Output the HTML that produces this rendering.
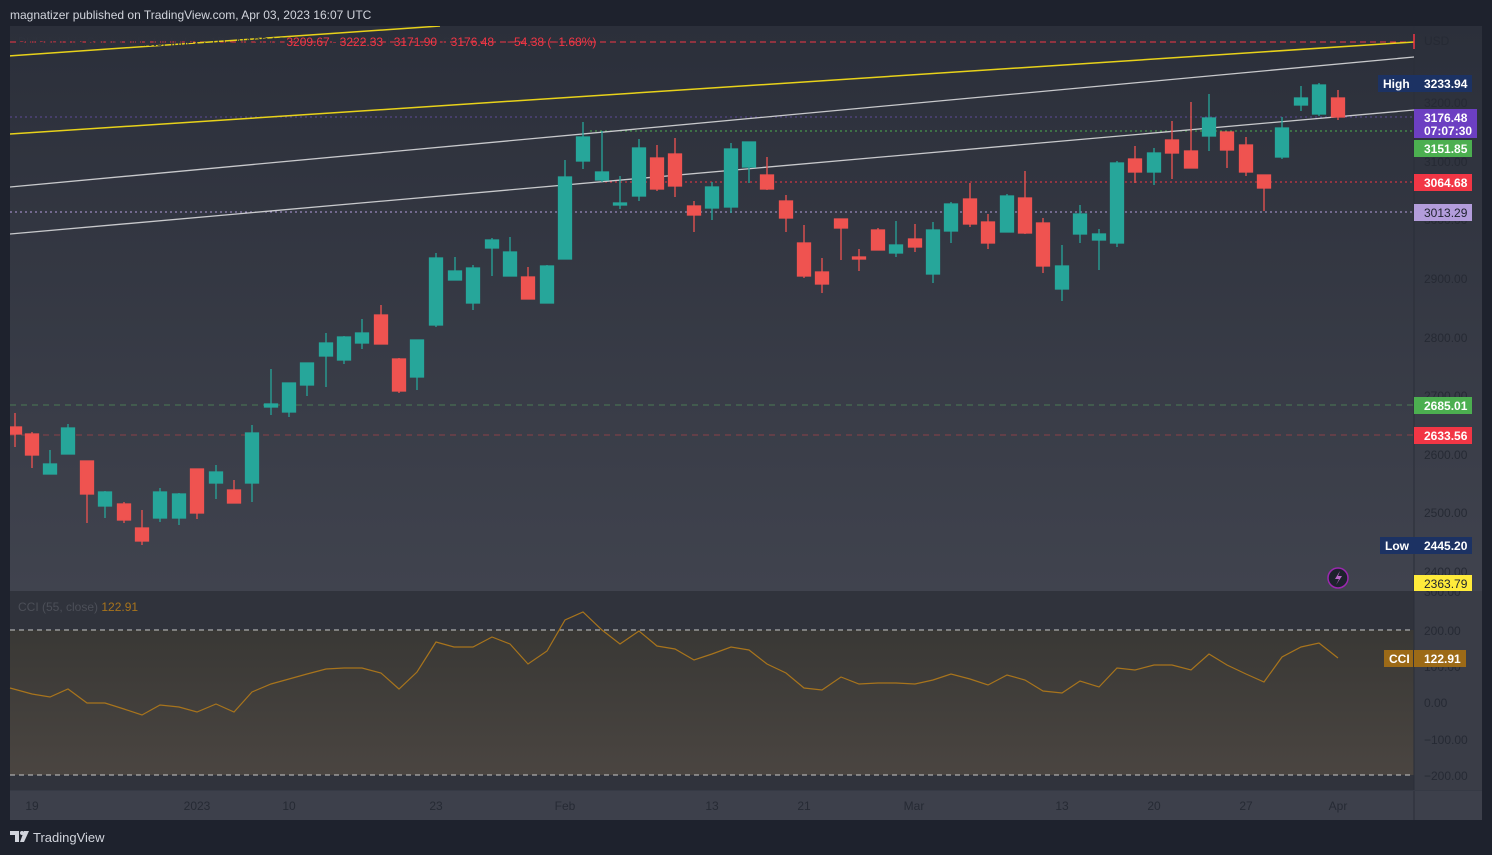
<!DOCTYPE html>
<html><head><meta charset="utf-8"><style>
html,body{margin:0;padding:0;background:#1e222d;}
svg{display:block;font-family:"Liberation Sans",sans-serif;}
</style></head><body>
<svg width="1492" height="855" viewBox="0 0 1492 855" xmlns="http://www.w3.org/2000/svg">
<defs>
<linearGradient id="mg" x1="0" y1="0" x2="0" y2="1"><stop offset="0" stop-color="#2b2f3a"/><stop offset="1" stop-color="#40434e"/></linearGradient>
<linearGradient id="cg" x1="0" y1="0" x2="0" y2="1"><stop offset="0" stop-color="#393835"/><stop offset="1" stop-color="#4a4541"/></linearGradient>
<clipPath id="mc"><rect x="10" y="26" width="1404" height="564"/></clipPath>
</defs>
<rect width="1492" height="855" fill="#1e222d"/>
<text x="10" y="19" font-size="12" fill="#d1d4dc">magnatizer published on TradingView.com, Apr 03, 2023 16:07 UTC</text>
<rect x="10" y="26" width="1472" height="565" fill="url(#mg)"/>
<rect x="10" y="591" width="1472" height="199" fill="#30333c"/>
<rect x="10" y="630" width="1404" height="145" fill="url(#cg)"/>
<rect x="1414" y="591" width="68" height="199" fill="#3a3d47"/>
<rect x="10" y="790" width="1472" height="30" fill="#3d404b"/>
<line x1="1414" y1="26" x2="1414" y2="820" stroke="#2a2e39" stroke-width="1"/>
<line x1="10" y1="790.5" x2="1482" y2="790.5" stroke="#363a45"/>
<g clip-path="url(#mc)">
<line x1="10" y1="42" x2="1414" y2="42" stroke="#f23645" stroke-dasharray="6 4"/>
<line x1="10" y1="405" x2="1414" y2="405" stroke="#4a7a55" stroke-dasharray="6 5"/>
<line x1="10" y1="435" x2="1414" y2="435" stroke="#8a4048" stroke-dasharray="6 5"/>
<line x1="10" y1="117" x2="1414" y2="117" stroke="#5e4a96" stroke-dasharray="2 3"/>
<line x1="590" y1="131" x2="1414" y2="131" stroke="#4caf50" stroke-dasharray="2 3"/>
<line x1="600" y1="182" x2="1414" y2="182" stroke="#f23645" stroke-dasharray="2 3"/>
<line x1="10" y1="212" x2="1414" y2="212" stroke="#b39ddb" stroke-dasharray="2 3"/>
<line x1="8" y1="56" x2="440" y2="26" stroke="#e8d21a" stroke-width="1.5"/>
<line x1="10" y1="134" x2="1414" y2="42" stroke="#e8d21a" stroke-width="1.5"/>
<line x1="10" y1="187" x2="1414" y2="57" stroke="#c8c9cc" stroke-width="1.3"/>
<line x1="10" y1="234" x2="1414" y2="110" stroke="#c8c9cc" stroke-width="1.3"/>
<g stroke-width="1.3">
<g fill="#ef5350" stroke="#ef5350"><line x1="15" y1="413" x2="15" y2="447"/><rect x="8.5" y="427" width="13" height="7"/></g>
<g fill="#ef5350" stroke="#ef5350"><line x1="32" y1="432" x2="32" y2="468"/><rect x="25.5" y="434" width="13" height="21"/></g>
<g fill="#26a69a" stroke="#26a69a"><line x1="50" y1="450" x2="50" y2="474"/><rect x="43.5" y="464" width="13" height="10"/></g>
<g fill="#26a69a" stroke="#26a69a"><line x1="68" y1="424" x2="68" y2="454"/><rect x="61.5" y="428" width="13" height="26"/></g>
<g fill="#ef5350" stroke="#ef5350"><line x1="87" y1="461" x2="87" y2="523"/><rect x="80.5" y="461" width="13" height="33"/></g>
<g fill="#26a69a" stroke="#26a69a"><line x1="105" y1="491" x2="105" y2="518"/><rect x="98.5" y="492" width="13" height="14"/></g>
<g fill="#ef5350" stroke="#ef5350"><line x1="124" y1="502" x2="124" y2="523"/><rect x="117.5" y="504" width="13" height="16"/></g>
<g fill="#ef5350" stroke="#ef5350"><line x1="142" y1="510" x2="142" y2="545"/><rect x="135.5" y="528" width="13" height="13"/></g>
<g fill="#26a69a" stroke="#26a69a"><line x1="160" y1="488" x2="160" y2="522"/><rect x="153.5" y="492" width="13" height="26"/></g>
<g fill="#26a69a" stroke="#26a69a"><line x1="179" y1="493" x2="179" y2="525"/><rect x="172.5" y="494" width="13" height="24"/></g>
<g fill="#ef5350" stroke="#ef5350"><line x1="197" y1="469" x2="197" y2="519"/><rect x="190.5" y="469" width="13" height="44"/></g>
<g fill="#26a69a" stroke="#26a69a"><line x1="216" y1="465" x2="216" y2="499"/><rect x="209.5" y="472" width="13" height="11"/></g>
<g fill="#ef5350" stroke="#ef5350"><line x1="234" y1="480" x2="234" y2="503"/><rect x="227.5" y="490" width="13" height="13"/></g>
<g fill="#26a69a" stroke="#26a69a"><line x1="252" y1="425" x2="252" y2="502"/><rect x="245.5" y="433" width="13" height="50"/></g>
<g fill="#26a69a" stroke="#26a69a"><line x1="271" y1="369" x2="271" y2="415"/><rect x="264.5" y="404" width="13" height="3"/></g>
<g fill="#26a69a" stroke="#26a69a"><line x1="289" y1="383" x2="289" y2="417"/><rect x="282.5" y="383" width="13" height="29"/></g>
<g fill="#26a69a" stroke="#26a69a"><line x1="307" y1="363" x2="307" y2="396"/><rect x="300.5" y="363" width="13" height="22"/></g>
<g fill="#26a69a" stroke="#26a69a"><line x1="326" y1="333" x2="326" y2="387"/><rect x="319.5" y="343" width="13" height="13"/></g>
<g fill="#26a69a" stroke="#26a69a"><line x1="344" y1="336" x2="344" y2="364"/><rect x="337.5" y="337" width="13" height="23"/></g>
<g fill="#26a69a" stroke="#26a69a"><line x1="362" y1="319" x2="362" y2="349"/><rect x="355.5" y="333" width="13" height="10"/></g>
<g fill="#ef5350" stroke="#ef5350"><line x1="381" y1="305" x2="381" y2="344"/><rect x="374.5" y="315" width="13" height="29"/></g>
<g fill="#ef5350" stroke="#ef5350"><line x1="399" y1="358" x2="399" y2="393"/><rect x="392.5" y="359" width="13" height="32"/></g>
<g fill="#26a69a" stroke="#26a69a"><line x1="417" y1="340" x2="417" y2="390"/><rect x="410.5" y="340" width="13" height="37"/></g>
<g fill="#26a69a" stroke="#26a69a"><line x1="436" y1="253" x2="436" y2="327"/><rect x="429.5" y="258" width="13" height="67"/></g>
<g fill="#26a69a" stroke="#26a69a"><line x1="455" y1="257" x2="455" y2="280"/><rect x="448.5" y="271" width="13" height="9"/></g>
<g fill="#26a69a" stroke="#26a69a"><line x1="473" y1="265" x2="473" y2="310"/><rect x="466.5" y="268" width="13" height="35"/></g>
<g fill="#26a69a" stroke="#26a69a"><line x1="492" y1="238" x2="492" y2="276"/><rect x="485.5" y="240" width="13" height="8"/></g>
<g fill="#26a69a" stroke="#26a69a"><line x1="510" y1="237" x2="510" y2="276"/><rect x="503.5" y="252" width="13" height="24"/></g>
<g fill="#ef5350" stroke="#ef5350"><line x1="528" y1="267" x2="528" y2="299"/><rect x="521.5" y="277" width="13" height="22"/></g>
<g fill="#26a69a" stroke="#26a69a"><line x1="547" y1="265" x2="547" y2="303"/><rect x="540.5" y="266" width="13" height="37"/></g>
<g fill="#26a69a" stroke="#26a69a"><line x1="565" y1="160" x2="565" y2="259"/><rect x="558.5" y="177" width="13" height="82"/></g>
<g fill="#26a69a" stroke="#26a69a"><line x1="583" y1="122" x2="583" y2="169"/><rect x="576.5" y="137" width="13" height="24"/></g>
<g fill="#26a69a" stroke="#26a69a"><line x1="602" y1="131" x2="602" y2="182"/><rect x="595.5" y="172" width="13" height="8"/></g>
<g fill="#26a69a" stroke="#26a69a"><line x1="620" y1="176" x2="620" y2="209"/><rect x="613.5" y="203" width="13" height="2"/></g>
<g fill="#26a69a" stroke="#26a69a"><line x1="639" y1="139" x2="639" y2="201"/><rect x="632.5" y="148" width="13" height="48"/></g>
<g fill="#ef5350" stroke="#ef5350"><line x1="657" y1="145" x2="657" y2="191"/><rect x="650.5" y="158" width="13" height="31"/></g>
<g fill="#ef5350" stroke="#ef5350"><line x1="675" y1="138" x2="675" y2="197"/><rect x="668.5" y="154" width="13" height="32"/></g>
<g fill="#ef5350" stroke="#ef5350"><line x1="694" y1="201" x2="694" y2="232"/><rect x="687.5" y="206" width="13" height="9"/></g>
<g fill="#26a69a" stroke="#26a69a"><line x1="712" y1="182" x2="712" y2="220"/><rect x="705.5" y="187" width="13" height="21"/></g>
<g fill="#26a69a" stroke="#26a69a"><line x1="731" y1="143" x2="731" y2="213"/><rect x="724.5" y="149" width="13" height="58"/></g>
<g fill="#26a69a" stroke="#26a69a"><line x1="749" y1="142" x2="749" y2="183"/><rect x="742.5" y="142" width="13" height="25"/></g>
<g fill="#ef5350" stroke="#ef5350"><line x1="767" y1="157" x2="767" y2="190"/><rect x="760.5" y="175" width="13" height="14"/></g>
<g fill="#ef5350" stroke="#ef5350"><line x1="786" y1="195" x2="786" y2="232"/><rect x="779.5" y="201" width="13" height="17"/></g>
<g fill="#ef5350" stroke="#ef5350"><line x1="804" y1="225" x2="804" y2="278"/><rect x="797.5" y="243" width="13" height="33"/></g>
<g fill="#ef5350" stroke="#ef5350"><line x1="822" y1="258" x2="822" y2="293"/><rect x="815.5" y="272" width="13" height="12"/></g>
<g fill="#ef5350" stroke="#ef5350"><line x1="841" y1="219" x2="841" y2="260"/><rect x="834.5" y="219" width="13" height="9"/></g>
<g fill="#ef5350" stroke="#ef5350"><line x1="859" y1="249" x2="859" y2="271"/><rect x="852.5" y="257" width="13" height="2"/></g>
<g fill="#ef5350" stroke="#ef5350"><line x1="878" y1="228" x2="878" y2="250"/><rect x="871.5" y="230" width="13" height="20"/></g>
<g fill="#26a69a" stroke="#26a69a"><line x1="896" y1="221" x2="896" y2="257"/><rect x="889.5" y="245" width="13" height="8"/></g>
<g fill="#ef5350" stroke="#ef5350"><line x1="915" y1="224" x2="915" y2="252"/><rect x="908.5" y="239" width="13" height="8"/></g>
<g fill="#26a69a" stroke="#26a69a"><line x1="933" y1="222" x2="933" y2="283"/><rect x="926.5" y="230" width="13" height="44"/></g>
<g fill="#26a69a" stroke="#26a69a"><line x1="951" y1="202" x2="951" y2="243"/><rect x="944.5" y="204" width="13" height="27"/></g>
<g fill="#ef5350" stroke="#ef5350"><line x1="970" y1="183" x2="970" y2="227"/><rect x="963.5" y="199" width="13" height="25"/></g>
<g fill="#ef5350" stroke="#ef5350"><line x1="988" y1="214" x2="988" y2="249"/><rect x="981.5" y="222" width="13" height="21"/></g>
<g fill="#26a69a" stroke="#26a69a"><line x1="1007" y1="194" x2="1007" y2="232"/><rect x="1000.5" y="196" width="13" height="36"/></g>
<g fill="#ef5350" stroke="#ef5350"><line x1="1025" y1="171" x2="1025" y2="234"/><rect x="1018.5" y="198" width="13" height="35"/></g>
<g fill="#ef5350" stroke="#ef5350"><line x1="1043" y1="218" x2="1043" y2="273"/><rect x="1036.5" y="223" width="13" height="43"/></g>
<g fill="#26a69a" stroke="#26a69a"><line x1="1062" y1="245" x2="1062" y2="301"/><rect x="1055.5" y="266" width="13" height="23"/></g>
<g fill="#26a69a" stroke="#26a69a"><line x1="1080" y1="205" x2="1080" y2="243"/><rect x="1073.5" y="214" width="13" height="20"/></g>
<g fill="#26a69a" stroke="#26a69a"><line x1="1099" y1="229" x2="1099" y2="270"/><rect x="1092.5" y="234" width="13" height="6"/></g>
<g fill="#26a69a" stroke="#26a69a"><line x1="1117" y1="161" x2="1117" y2="247"/><rect x="1110.5" y="163" width="13" height="80"/></g>
<g fill="#ef5350" stroke="#ef5350"><line x1="1135" y1="146" x2="1135" y2="183"/><rect x="1128.5" y="159" width="13" height="13"/></g>
<g fill="#26a69a" stroke="#26a69a"><line x1="1154" y1="148" x2="1154" y2="185"/><rect x="1147.5" y="153" width="13" height="19"/></g>
<g fill="#ef5350" stroke="#ef5350"><line x1="1172" y1="121" x2="1172" y2="179"/><rect x="1165.5" y="140" width="13" height="13"/></g>
<g fill="#ef5350" stroke="#ef5350"><line x1="1191" y1="102" x2="1191" y2="168"/><rect x="1184.5" y="151" width="13" height="17"/></g>
<g fill="#26a69a" stroke="#26a69a"><line x1="1209" y1="94" x2="1209" y2="151"/><rect x="1202.5" y="118" width="13" height="18"/></g>
<g fill="#ef5350" stroke="#ef5350"><line x1="1227" y1="132" x2="1227" y2="168"/><rect x="1220.5" y="132" width="13" height="18"/></g>
<g fill="#ef5350" stroke="#ef5350"><line x1="1246" y1="137" x2="1246" y2="176"/><rect x="1239.5" y="145" width="13" height="27"/></g>
<g fill="#ef5350" stroke="#ef5350"><line x1="1264" y1="175" x2="1264" y2="211"/><rect x="1257.5" y="175" width="13" height="13"/></g>
<g fill="#26a69a" stroke="#26a69a"><line x1="1282" y1="117" x2="1282" y2="159"/><rect x="1275.5" y="128" width="13" height="29"/></g>
<g fill="#26a69a" stroke="#26a69a"><line x1="1301" y1="86" x2="1301" y2="111"/><rect x="1294.5" y="98" width="13" height="7"/></g>
<g fill="#26a69a" stroke="#26a69a"><line x1="1319" y1="83" x2="1319" y2="116"/><rect x="1312.5" y="85" width="13" height="29"/></g>
<g fill="#ef5350" stroke="#ef5350"><line x1="1338" y1="90" x2="1338" y2="120"/><rect x="1331.5" y="98" width="13" height="19"/></g>
</g>
</g>
<line x1="1414" y1="34" x2="1414" y2="49" stroke="#f23645" stroke-width="1.5"/>
<g font-size="12" fill="#2e323d">
<text x="18" y="46">Philadelphia Semiconductor Index · 1D · NASDAQ</text>
<text x="277" y="46">O<tspan fill="#f23645">3209.67</tspan></text>
<text x="331" y="46">H<tspan fill="#f23645">3222.33</tspan></text>
<text x="387" y="46">L<tspan fill="#f23645">3171.90</tspan></text>
<text x="442" y="46">C<tspan fill="#f23645">3176.48</tspan></text>
<text x="507" y="46" fill="#f23645">−54.38 (−1.68%)</text>
</g>
<g font-size="12" fill="#262a34">
<text x="1424" y="45">USD</text>
<text x="1424" y="107">3200.00</text>
<text x="1424" y="166">3100.00</text>
<text x="1424" y="224">3000.00</text>
<text x="1424" y="283">2900.00</text>
<text x="1424" y="342">2800.00</text>
<text x="1424" y="400">2700.00</text>
<text x="1424" y="459">2600.00</text>
<text x="1424" y="517">2500.00</text>
<text x="1424" y="576">2400.00</text>
<text x="1424" y="596">300.00</text>
<text x="1424" y="635">200.00</text>
<text x="1424" y="671">100.00</text>
<text x="1424" y="707">0.00</text>
<text x="1424" y="744">−100.00</text>
<text x="1424" y="780">−200.00</text>
</g>
<g font-size="12" font-weight="bold">
<rect x="1378" y="75" width="36" height="17" fill="#1c3263"/><text x="1383" y="88" fill="#fff">High</text>
<rect x="1414" y="75" width="58" height="17" fill="#1c3263"/><text x="1424" y="88" fill="#fff">3233.94</text>
<rect x="1414" y="109" width="63" height="29" fill="#6c3fc2"/><text x="1424" y="122" fill="#fff">3176.48</text><text x="1424" y="135" fill="#fff">07:07:30</text>
<rect x="1414" y="140" width="58" height="17" fill="#4caf50"/><text x="1424" y="153" fill="#fff">3151.85</text>
<rect x="1414" y="174" width="58" height="17" fill="#f23645"/><text x="1424" y="187" fill="#fff">3064.68</text>
<rect x="1414" y="204" width="58" height="17" fill="#b39ddb"/><text x="1424" y="217" fill="#1e222d" font-weight="normal">3013.29</text>
<rect x="1414" y="397" width="58" height="17" fill="#4caf50"/><text x="1424" y="410" fill="#fff">2685.01</text>
<rect x="1414" y="427" width="58" height="17" fill="#f23645"/><text x="1424" y="440" fill="#fff">2633.56</text>
<rect x="1380" y="537" width="34" height="17" fill="#1c3263"/><text x="1385" y="550" fill="#fff">Low</text>
<rect x="1414" y="537" width="58" height="17" fill="#1c3263"/><text x="1424" y="550" fill="#fff">2445.20</text>
<rect x="1414" y="575" width="58" height="16" fill="#ffeb3b"/><text x="1424" y="588" fill="#1e222d" font-weight="normal">2363.79</text>
</g>
<circle cx="1338" cy="578" r="10" fill="#1e222d" stroke="#9c27b0" stroke-width="1.5"/>
<path d="M1340 571 L1335 579 L1339 579 L1336 585 L1342 576 L1338 576 Z" fill="#ba68c8"/>
<line x1="10" y1="630" x2="1414" y2="630" stroke="#c8c8c8" stroke-dasharray="5 4"/>
<line x1="10" y1="775" x2="1414" y2="775" stroke="#c8c8c8" stroke-dasharray="5 4"/>
<text x="18" y="611" font-size="12" fill="#4c4f58">CCI (55, close) <tspan fill="#a8741c">122.91</tspan></text>
<polyline fill="none" stroke="#a8741c" stroke-width="1.2" points="10,688 32,694 50,697 68,689 87,703 105,703 124,709 142,715 160,705 179,707 197,712 216,704 234,712 252,692 271,684 289,679 307,674 326,669 344,668 362,668 381,673 399,689 417,672 436,642 454,647 473,647 492,637 510,644 528,664 547,651 565,620 583,612 602,630 620,644 639,631 657,646 675,649 694,660 712,654 731,647 749,650 767,664 786,673 804,688 822,690 841,677 859,684 878,683 896,683 915,684 933,680 951,674 970,679 988,685 1007,675 1025,680 1043,691 1062,693 1080,681 1099,687 1117,668 1135,670 1154,665 1172,665 1191,670 1209,654 1227,665 1246,674 1264,682 1282,657 1301,647 1319,643 1338,658"/>
<g font-size="12" font-weight="bold" fill="#fff">
<rect x="1384" y="650" width="29" height="17" fill="#9c6a17"/><text x="1389" y="663">CCI</text>
<rect x="1414" y="650" width="52" height="17" fill="#9c6a17"/><text x="1424" y="663">122.91</text>
</g>
<g font-size="12" fill="#262a34" text-anchor="middle">
<text x="32" y="810">19</text><text x="197" y="810">2023</text><text x="289" y="810">10</text><text x="436" y="810">23</text><text x="565" y="810">Feb</text><text x="712" y="810">13</text><text x="804" y="810">21</text><text x="914" y="810">Mar</text><text x="1062" y="810">13</text><text x="1154" y="810">20</text><text x="1246" y="810">27</text><text x="1338" y="810">Apr</text>
</g>
<g fill="#d1d4dc">
<path d="M10 831 h9 v11 h-4 v-7 h-5 z"/><circle cx="22" cy="833" r="2"/><path d="M24 831 h5 l-5 11 h-4 z"/>
<text x="33" y="842" font-size="13">TradingView</text>
</g>
</svg>
</body></html>
